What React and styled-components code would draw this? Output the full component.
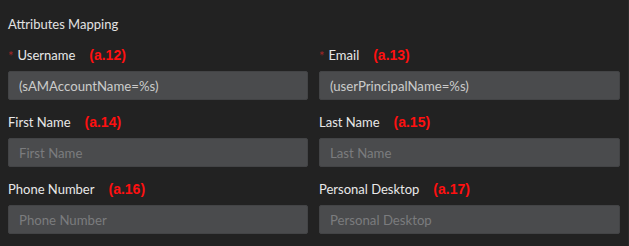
import React from "react";
import styled, { createGlobalStyle } from "styled-components";

const GlobalStyle = createGlobalStyle`
  body {
    margin: 0;
    background: #222222;
    font-family: Lato, "Open Sans", sans-serif;
  }
`;

const Panel = styled.div`
  width: 629px;
  height: 246px;
  box-sizing: border-box;
  padding: 14px 9px 0 8px;
  background: #222222;
  border-right: 1px solid #2a2a2a;
`;

const Title = styled.div`
  color: #e2e2e2;
  font-size: 13px;
  line-height: 20px;
  margin-bottom: 11px;
`;

const Grid = styled.div`
  display: grid;
  grid-template-columns: 300px 301px;
  column-gap: 11px;
  row-gap: 12px;
`;

const Field = styled.div`
  display: flex;
  flex-direction: column;
`;

const Label = styled.label`
  display: flex;
  align-items: center;
  height: 20px;
  margin-bottom: 6px;
  color: #e8e8e8;
  font-size: 13px;
`;

const Star = styled.span`
  color: #a32626;
  font-size: 13px;
  margin-right: 4px;
  position: relative;
  top: 1px;
`;

const Tag = styled.span`
  margin-left: 14px;
  color: #ff1010;
  font-family: "Liberation Sans", Arial, sans-serif;
  font-weight: bold;
  font-size: 14px;
`;

const Input = styled.input`
  box-sizing: border-box;
  height: 29px;
  width: 100%;
  padding: 0 10px;
  background: #4a4b4d;
  border: 1px solid #434446;
  border-radius: 2px;
  color: #cbcbcb;
  font-family: Lato, "Open Sans", sans-serif;
  font-size: 13.2px;
  outline: none;

  &::placeholder {
    color: #7b7c7e;
  }
`;

const fields = [
  { label: "Username", tag: "(a.12)", required: true, value: "(sAMAccountName=%s)" },
  { label: "Email", tag: "(a.13)", required: true, value: "(userPrincipalName=%s)" },
  { label: "First Name", tag: "(a.14)", placeholder: "First Name" },
  { label: "Last Name", tag: "(a.15)", placeholder: "Last Name" },
  { label: "Phone Number", tag: "(a.16)", placeholder: "Phone Number" },
  { label: "Personal Desktop", tag: "(a.17)", placeholder: "Personal Desktop" }
];

const App = () => {
  return (
    <>
      <GlobalStyle />
      <Panel>
        <Title>Attributes Mapping</Title>
        <Grid>
          {fields.map(f => (
            <Field key={f.label}>
              <Label>
                {f.required && <Star>*</Star>}
                {f.label}
                <Tag>{f.tag}</Tag>
              </Label>
              {f.value ? (
                <Input readOnly value={f.value} />
              ) : (
                <Input placeholder={f.placeholder} />
              )}
            </Field>
          ))}
        </Grid>
      </Panel>
    </>
  );
};

export default App;
